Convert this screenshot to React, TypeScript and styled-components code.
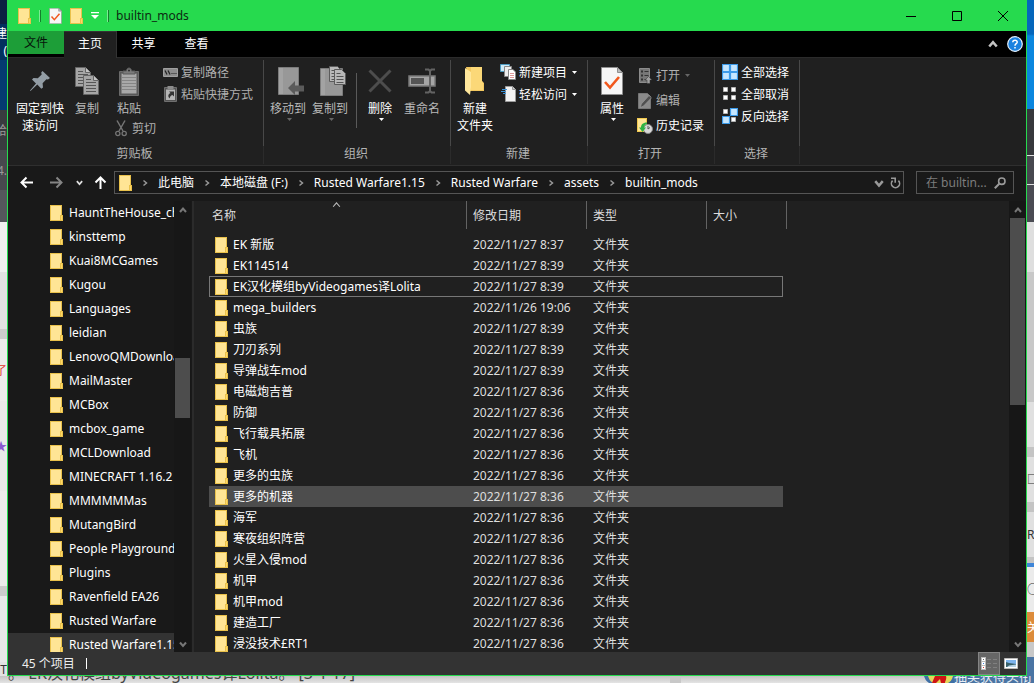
import React from 'react';
import styled, { createGlobalStyle, css } from 'styled-components';

const GlobalStyle = createGlobalStyle`
  *, *::before, *::after { box-sizing: border-box; }
  html, body { margin: 0; padding: 0; }
  body, button, input {
    font-family: "Noto Sans", "Noto Sans CJK SC", sans-serif;
    font-size: 12px;
    line-height: 17px;
  }
  body { background: #e6e6e6; color: #fff; overflow: hidden; }
  button { border: 0; padding: 0; margin: 0; background: none; color: inherit; }
  a { color: inherit; text-decoration: none; }
  ul, ol { margin: 0; padding: 0; list-style: none; }
  svg { display: block; flex: none; }
`;

/* ---------- desktop behind the window ---------- */

const Desktop = styled.div`
  display: grid;
  grid-template-columns: 7px minmax(0, 1fr) 7px;
  grid-template-rows: minmax(0, 1fr) 7px;
  height: 100vh;
`;

const Strip = styled.div`
  display: flex;
  flex-direction: column;
  overflow: hidden;
  min-height: 0;
`;

const Patch = styled.div<{ h?: number; bg: string; fg?: string }>`
  flex: ${p => (p.h ? `0 0 ${p.h}px` : '1 0 0')};
  background: ${p => p.bg};
  color: ${p => p.fg || '#333'};
  display: flex;
  flex-direction: column;
  justify-content: center;
  align-items: flex-end;
  white-space: nowrap;
  overflow: hidden;
`;

const RightPatch = styled(Patch)`
  align-items: flex-start;
`;

const Ledge = styled.div`
  grid-column: 1 / -1;
  display: flex;
  align-items: flex-end;
  overflow: hidden;
  background: linear-gradient(#c4c4c4, #e4e4e4);
  color: #444;
`;

const LedgeText = styled.span`
  flex: 1;
  padding-left: 8px;
  font-size: 16px;
  line-height: 20px;
  white-space: nowrap;
`;

const LedgeGap = styled.span<{ w: number; bg: string }>`
  width: ${p => p.w}px;
  height: 7px;
  background: ${p => p.bg};
`;

const Banner = styled.span`
  width: 80px;
  height: 7px;
  overflow: hidden;
  display: flex;
  align-items: flex-end;
  background: #4a74a3;
  color: #e8eef5;
  font-size: 13px;
  line-height: 13px;
  white-space: nowrap;
`;

/* ---------- window ---------- */

const Window = styled.main`
  display: flex;
  flex-direction: column;
  min-height: 0;
  background: #191919;
  border: 1px solid #26da4e;
  border-top: 0;
`;

const TitleBar = styled.header`
  flex: none;
  display: flex;
  align-items: center;
  height: 31px;
  padding-left: 10px;
  background: #26da4e;
  color: #0c2a12;
`;

const QuickAccess = styled.div`
  display: flex;
  align-items: center;
  gap: 8px;
`;

const Tick = styled.span`
  width: 2px;
  height: 12px;
  border: solid #157f2c;
  border-width: 0 1px 0 0;
  background: #7ceb95;
`;

const Title = styled.h1`
  flex: 1;
  margin: 0 0 0 7px;
  font-size: 12px;
  font-weight: 400;
`;

const CaptionButton = styled.button`
  width: 46px;
  height: 31px;
  display: grid;
  place-items: center;
  color: #000;
`;

const TabRow = styled.nav`
  flex: none;
  display: flex;
  height: 27px;
  background: #000;
  border-bottom: 1px solid #2b2b2b;
`;

const Tab = styled.button<{ $kind?: 'file' | 'active' }>`
  width: 53px;
  height: 25px;
  color: #fff;
  ${p => p.$kind === 'file' && css`
    width: 56px;
    height: 23px;
    background: #1d9e38;
    color: #06150a;
  `}
  ${p => p.$kind === 'active' && css`
    height: 27px;
    padding-bottom: 3px;
    background: #202020;
    border: solid #333;
    border-width: 1px 1px 0 0;
  `}
`;

const TabTools = styled.div`
  margin-left: auto;
  display: flex;
  align-items: center;
  gap: 9px;
  padding-right: 3px;
`;

const Ribbon = styled.section`
  flex: none;
  display: flex;
  height: 108px;
  background: #202020;
  border-bottom: 1px solid #2f2f2f;
`;

const Group = styled.section<{ w: number; pad: number }>`
  width: ${p => p.w}px;
  flex: none;
  display: grid;
  grid-template-rows: 1fr 24px;
  padding-top: 2px;
  background: linear-gradient(#484848 0 86px, #2b2b2b 86px 104px, transparent 104px) right 2px / 1px 100% no-repeat;
  & > div { padding-left: ${p => p.pad}px; }
`;

const GroupBody = styled.div`
  display: flex;
  align-items: flex-start;
  padding-top: 1px;
`;

const GroupName = styled.h2`
  margin: 0;
  padding: 4px 3px 0 0;
  font-size: 12px;
  font-weight: 400;
  text-align: center;
  color: #b4b4b4;
`;

const BigButton = styled.button<{ w: number; $dim?: boolean }>`
  width: ${p => p.w}px;
  flex: none;
  display: flex;
  flex-direction: column;
  align-items: center;
  padding-top: 4px;
  white-space: nowrap;
  color: ${p => (p.$dim ? '#b9b9b9' : '#fff')};
`;

const BigIcon = styled.span`
  height: 32px;
  margin-bottom: 3px;
  display: grid;
  place-items: center;
`;

const Stack = styled.div<{ ml?: number; mt?: number }>`
  display: flex;
  flex-direction: column;
  margin-left: ${p => p.ml || 0}px;
  margin-top: ${p => p.mt || 0}px;
`;

const SmallButton = styled.button<{ h?: number; $dim?: boolean }>`
  height: ${p => p.h || 22}px;
  display: flex;
  align-items: center;
  gap: 3px;
  white-space: nowrap;
  color: ${p => (p.$dim ? '#b0b0b0' : '#fff')};
`;

const IconSlot = styled.span`
  width: 16px;
  display: grid;
  place-items: center;
`;

const Rule = styled.span`
  width: 1px;
  height: 55px;
  margin: 12px 7px 0 5px;
  background: #5a5a5a;
`;

const CaretBox = styled.span<{ $side?: boolean }>`
  color: inherit;
  ${p => p.$side ? css`margin-left: 2px;` : css`margin-top: 1px; padding-left: 3px;`}
`;

/* ---------- address row ---------- */

const AddressRow = styled.div`
  flex: none;
  display: flex;
  align-items: center;
  height: 35px;
  padding: 0 12px 2px;
`;

const NavButtons = styled.div`
  display: grid;
  align-items: center;
  justify-items: start;
  grid-template-columns: 30px 26px 18px 20px;
`;

const AddressBox = styled.div`
  flex: 1;
  min-width: 0;
  height: 23px;
  display: flex;
  align-items: center;
  padding: 0 2px 0 4px;
  border: 1px solid #555;
`;

const Crumbs = styled.ol`
  flex: 1;
  min-width: 0;
  display: flex;
  align-items: center;
  overflow: hidden;
  white-space: nowrap;
  li { display: flex; align-items: center; }
  li > svg { margin: 0 9px; }
`;

const RefreshButton = styled.button`
  margin-left: 6px;
`;

const SearchBox = styled.label`
  width: 98px;
  height: 23px;
  margin-left: 12px;
  display: flex;
  align-items: center;
  padding: 0 7px 0 9px;
  border: 1px solid #555;
`;

const SearchInput = styled.input`
  flex: 1;
  min-width: 0;
  padding: 0;
  border: 0;
  outline: 0;
  background: none;
  color: #fff;
  &::placeholder { color: #7d7d7d; opacity: 1; }
`;

/* ---------- panes ---------- */

const Panes = styled.div`
  flex: 1;
  min-height: 0;
  display: flex;
`;

const Tree = styled.nav`
  width: 166px;
  flex: none;
  overflow: hidden;
`;

const TreeLink = styled.a<{ $current: boolean }>`
  height: 24px;
  display: flex;
  align-items: center;
  gap: 6px;
  padding: 0 0 1px 42px;
  overflow: hidden;
  white-space: nowrap;
  background: ${p => (p.$current ? '#333' : 'transparent')};
`;

const ScrollTrack = styled.div`
  width: 17px;
  flex: none;
  display: flex;
  flex-direction: column;
  align-items: center;
  background: #171717;
  & > svg { margin: 5px 0 4px; }
`;

const ScrollSpace = styled.span<{ grow: number }>`
  flex: ${p => p.grow} 0 0;
`;

const Thumb = styled.span<{ grow: number }>`
  flex: ${p => p.grow} 0 0;
  width: 15px;
  background: #4d4d4d;
`;

const Listing = styled.div`
  flex: 1;
  min-width: 0;
  overflow: hidden;
  margin-left: 1px;
  padding-left: 15px;
  border-left: 2px solid #2b2b2b;
  background: #202020;
`;

const FileTable = styled.table`
  width: 578px;
  table-layout: fixed;
  border-collapse: separate;
  border-spacing: 0;
  td, th { padding: 0 0 0 6px; text-align: left; font-weight: 400; white-space: nowrap; }
  th:first-child { padding-left: 3px; }
  tbody::before { content: ""; display: block; height: 5px; }
`;

const HeadCell = styled.th`
  height: 28px;
  color: #dcdcdc;
  border-right: 1px solid #636363;
`;

const SortHead = styled.span`
  display: grid;
  grid-template-columns: 1fr auto 1fr;
  align-items: start;
  padding-right: 6px;
  svg { margin-top: -7px; }
`;

const Row = styled.tr<{ $state?: string }>`
  height: 21px;
  color: #dedede;
  ${p => p.$state === 'focus' && css`
    td:not(:last-child) { box-shadow: inset 0 1px #777, inset 0 -1px #777; }
    td:first-child { box-shadow: inset 0 1px #777, inset 0 -1px #777, inset 1px 0 #777; }
    td:nth-child(4) { box-shadow: inset 0 1px #777, inset 0 -1px #777, inset -1px 0 #777; }
  `}
  ${p => p.$state === 'hover' && css`td:not(:last-child) { background: #4d4d4d; }`}
`;

const NameCell = styled.span`
  display: flex;
  align-items: center;
  gap: 5px;
  color: #fff;
`;

const StatusBar = styled.footer`
  flex: none;
  display: flex;
  align-items: center;
  height: 23px;
  padding: 0 4px 0 14px;
  background: #333;
`;

const Count = styled.span`
  flex: 1;
  display: flex;
  align-items: center;
  gap: 11px;
  color: #eee;
  &::after { content: ""; width: 1px; height: 11px; background: #fff; }
`;

const ViewButton = styled.button<{ $on?: boolean }>`
  width: 22px;
  height: 23px;
  display: grid;
  place-items: center;
  background: ${p => (p.$on ? '#666' : 'transparent')};
  border: ${p => (p.$on ? '1px solid #858585' : '0')};
`;

/* ---------- drawings ---------- */

const FolderIcon = () => (
  <svg width="13" height="16" viewBox="0 0 13 16">
    <path d="M0 0h12v10h1v6H0z" fill="#e9c14b" />
    <path d="M1 1h10v9h-1v5H1z" fill="#ffe595" />
    <path d="M11 11h1v4h-1z" fill="#ffd767" />
  </svg>
);

const Caret = ({ dim }: { dim?: boolean }) => (
  <svg width="5" height="3" viewBox="0 0 5 3">
    <path d="M0 0h5L2.500 3z" fill={dim ? '#666' : '#fff'} />
  </svg>
);

const Chevron = ({ dir, color = '#999', size = 8, stroke = 2 }: { dir: 'up' | 'down' | 'right'; color?: string; size?: number; stroke?: number }) => {
  const d = { up: 'M1 6l3-3.500L7 6', down: 'M1 2.500L4 6l3-3.500', right: 'M2.500 1.500L5.500 4L2.500 6.500' }[dir];
  return (
    <svg width={size} height={size} viewBox="0 0 8 8" fill="none" stroke={color} strokeWidth={stroke}>
      <path d={d} />
    </svg>
  );
};

const Arrow = ({ rotate = 0, color = '#fff' }: { rotate?: number; color?: string }) => (
  <svg width="13" height="13" viewBox="0 0 13 13" fill="none" stroke={color} strokeWidth="2">
    <g transform={`rotate(${rotate} 6.5 6.5)`}><path d="M13 6.500H1.500M6.500 1.500l-5 5l5 5" /></g>
  </svg>
);

const CheckPage = ({ w, h }: { w: number; h: number }) => (
  <svg width={w} height={h} viewBox="0 0 22 28">
    <path d="M.5.5h16l5 5v22H.5z" fill="#f6f6f6" stroke="#8f8f8f" />
    <path d="M16.500.5v5h5z" fill="#bbb" stroke="#8f8f8f" />
    <path d="M4 15l5 5.500L18 10" fill="none" stroke="#f1571c" strokeWidth="2.600" />
  </svg>
);

const PinIcon = () => (
  <svg width="22" height="22" viewBox="0 0 22 22" fill="#939da5">
    <path d="M13.500 1L21 8l-2 1.500-1.600-.3-3.800 4 .4 4.300-1.700 1.200-4-4.200L1.500 21 1 20.500l6-7L3 9.600 4.500 8l4.300.2L12.700 4.500 12.200 2.500z" />
  </svg>
);

const Sheet = ({ x, y }: { x: number; y: number }) => (
  <g transform={`translate(${x} ${y})`}>
    <path d="M.5.5h10l5 5v14H.5z" fill="#a6a6a6" stroke="#666" />
    <path d="M10.500.5v5h5" fill="#c4c4c4" stroke="#666" />
    <path d="M3 4.500h5M3 7.500h10M3 10.500h10M3 13.500h10M3 16.500h10" stroke="#565656" />
  </g>
);

const CopyIcon = () => (
  <svg width="24" height="28" viewBox="0 0 24 28"><Sheet x={0} y={0} /><Sheet x={8} y={8} /></svg>
);

const PasteIcon = () => (
  <svg width="20" height="29" viewBox="0 0 20 29">
    <path d="M.5 4.500h19v24H.5z" fill="#595959" stroke="#6b6b6b" />
    <path d="M2.500 6.500h15v20h-15z" fill="#a8a8a8" />
    <path d="M3 10.500h14M3 13.500h14M3 16.500h14M3 19.500h14M3 22.500h14" stroke="#858585" />
    <path d="M4 7V4h3.500C7.500 0 12.500 0 12.500 4H16v3z" fill="#7b7b7b" stroke="#5a5a5a" />
    <circle cx="10" cy="3.500" r="1" fill="#2a2a2a" />
  </svg>
);

const CutIcon = () => (
  <svg width="12" height="17" viewBox="0 0 12 17" fill="none" stroke="#757575">
    <path d="M2 .5L8 11M10 .5L4 11" strokeWidth="1.500" />
    <circle cx="2.800" cy="13.500" r="2.100" strokeWidth="1.300" />
    <circle cx="9.200" cy="13.500" r="2.100" strokeWidth="1.300" />
  </svg>
);

const PathIcon = () => (
  <svg width="15" height="9" viewBox="0 0 15 9">
    <path d="M.5.5h14v8H.5z" fill="#8c8c8c" stroke="#a0a0a0" />
    <path d="M2 2.500l2 4M5 2.500l2 4" stroke="#222" strokeWidth="1.300" />
    <path d="M8.500 5.500h1M10.500 5.500h1M12.500 5.500h1" stroke="#222" />
  </svg>
);

const PasteLinkIcon = () => (
  <svg width="13" height="16" viewBox="0 0 13 16">
    <path d="M.5 1.500h12v14H.5z" fill="#555" stroke="#6f6f6f" />
    <path d="M2 3.500h9v10.500H2z" fill="#b5b5b5" />
    <path d="M3.500 0h6v3h-6z" fill="#8c8c8c" />
    <path d="M5 5.500h5v5L8.500 9C6.500 9.500 5.500 11 6 12.500 3.500 11 4 8 6.500 7z" fill="#333" />
  </svg>
);

const MoveIcon = () => (
  <svg width="32" height="28" viewBox="-6 0 32 28">
    <path d="M.5.500h20v27H.5z" fill="#989898" stroke="#7c7c7c" />
    <path d="M1 1h4v26H1z" fill="#a3a3a3" />
    <path d="M10 21l7-7v4.500h9v6h-9V28z" fill="#5b5b5b" />
  </svg>
);

const CopyToIcon = () => (
  <svg width="32" height="30" viewBox="-6 0 32 30">
    <path d="M.5 2.500h22v27H.5z" fill="#989898" stroke="#7c7c7c" />
    <path d="M1 3h4v26H1z" fill="#a3a3a3" />
    <path d="M9.500.5h8l4 4v11h-12z" fill="#b8b8b8" stroke="#5c5c5c" />
    <path d="M11.500 4.500h5M11.500 7.500h8M11.500 10.500h8M11.500 13.500h3" stroke="#555" />
    <path d="M14.500 3.500h7l4 4v11h-11z" fill="#b8b8b8" stroke="#5c5c5c" />
    <path d="M16.500 7.500h4M16.500 10.500h7M16.500 13.500h7M16.500 16.500h7" stroke="#555" />
  </svg>
);

const DeleteIcon = () => (
  <svg width="24" height="24" viewBox="0 0 24 24" stroke="#4d4d4d" strokeWidth="3">
    <path d="M1.500 1.500l21 21M22.500 1.500l-21 21" />
  </svg>
);

const RenameIcon = () => (
  <svg width="28" height="26" viewBox="0 0 28 26" fill="none">
    <path d="M1 8h26v10H1z" fill="#a5a5a5" stroke="#7a7a7a" strokeWidth="1.500" />
    <path d="M3 10h13v6H3z" fill="#555" />
    <path d="M17 1.500h3.500L22 3l1.500-1.500H27M17 24.500h3.500L22 23l1.500 1.500H27M22 3v20" stroke="#636363" strokeWidth="2" />
  </svg>
);

const NewFolderIcon = () => (
  <svg width="20" height="28" viewBox="0 0 20 28">
    <path d="M1 0h16v14l2 2v8H5z" fill="#f3c85f" />
    <path d="M6 0h11v14l1 2v7H6z" fill="#fbd878" />
    <path d="M0 1l6 4v15l-1 8-5-4.500z" fill="#ffe79c" />
  </svg>
);

const NewItemIcon = () => (
  <svg width="16" height="16" viewBox="0 0 16 16">
    <path d="M.5.500h9v7h-9z" fill="#cdeaf7" stroke="#4f9cc2" />
    <path d="M4.500 2.500h7v10h-7z" fill="#eee" stroke="#888" />
    <path d="M8.500 5.500h4.500l2.500 2.500v7.500h-7z" fill="#fff" stroke="#888" />
    <path d="M10 9.500h4M10 11.500h4M10 13.500h4" stroke="#d99" />
  </svg>
);

const EasyAccessIcon = () => (
  <svg width="15" height="16" viewBox="0 0 15 16">
    <path d="M4.500.5h7l3 3v12h-10z" fill="#f3f3f3" stroke="#9c9c9c" />
    <path d="M11.500.5v3h3" fill="#ccc" stroke="#999" />
    <path d="M1 3.500h5M0 5.500h5M2 7.500h3" stroke="#3c92d6" />
  </svg>
);

const OpenIcon = () => (
  <svg width="14" height="16" viewBox="0 0 14 16">
    <path d="M1.500.500h10v14h-10z" fill="#777" stroke="#8c8c8c" />
    <path d="M3 2.500h2v2H3zM3 6.500h2v2H3zM3 10.500h2v2H3z" fill="#333" />
    <path d="M6.500 3.500h4M6.500 7.500h4M6.500 11.500h2" stroke="#333" />
    <path d="M10.500 8.500l3.500 3.500h-2v3.500H9V12H7z" fill="#a0a0a0" stroke="#333" strokeWidth=".5" />
  </svg>
);

const EditIcon = () => (
  <svg width="14" height="16" viewBox="0 0 14 16">
    <path d="M.5.500h9l3 3v12H.5z" fill="#8a8a8a" stroke="#777" />
    <path d="M2.500 14.500l.8-3.500L11 2.500l2.500 2.300L5.500 13z" fill="#505050" stroke="#a0a0a0" strokeWidth=".6" />
  </svg>
);

const HistoryIcon = () => (
  <svg width="16" height="16" viewBox="0 0 16 16">
    <path d="M0 0h10v10h1v4H0z" fill="#f0c84f" />
    <path d="M1 1h8v12H1z" fill="#ffe595" />
    <circle cx="11" cy="11" r="4.500" fill="#d8d8d8" stroke="#888" />
    <path d="M11 8v3l2-1.500" fill="none" stroke="#555" />
    <path d="M10 4.500C5.500 4.500 4 7 4 9.500H2L5.500 14 9 9.500H7C7 8 8 6.500 10 6z" fill="#2fb344" />
  </svg>
);

const TILES: [number, number][] = [[0, 0], [8, 0], [0, 8], [8, 8]];
const TilesIcon = ({ on }: { on: boolean[] }) => (
  <svg width="16" height="16" viewBox="0 0 16 16">
    {TILES.map(([x, y], i) => on[i]
      ? <path key={i} d={`M${x + .5} ${y + .5}h7v7h-7z`} fill="#c5e6ff" stroke="#3d9be9" strokeWidth="1.200" />
      : <path key={i} d={`M${x + (x ? 1.5 : 1.500)} ${y + 1.500}h4v4h-4z`} fill="#fff" stroke="#b4b4b4" />)}
  </svg>
);

const HelpIcon = () => (
  <svg width="16" height="16" viewBox="0 0 16 16" fill="none">
    <circle cx="8" cy="8" r="7.300" fill="#1b82e0" stroke="#e4f0fb" strokeWidth="1.200" />
    <path d="M5.800 6.300C5.800 3.400 10.300 3.600 10.200 6.200 10.100 7.700 8 7.700 8 9.700M8 10.900v1.600" stroke="#fff" strokeWidth="1.500" />
  </svg>
);

const RefreshIcon = () => (
  <svg width="11" height="12" viewBox="0 0 11 12" fill="none" stroke="#999" strokeWidth="1.600">
    <path d="M2.600 3.600A4.100 4.100 0 1 0 8.400 3.600" />
    <path d="M1 1.300h4.200v4.400" />
  </svg>
);

const SearchIcon = () => (
  <svg width="12" height="12" viewBox="0 0 12 12" fill="none" stroke="#9a9a9a">
    <circle cx="7.800" cy="4.200" r="3.200" strokeWidth="1.600" />
    <path d="M5.500 6.500L.8 11.200" strokeWidth="2" />
  </svg>
);

const DetailsIcon = () => (
  <svg width="16" height="13" viewBox="0 0 16 13">
    <path d="M0 0h5v13H0z" fill="#bbb" />
    <path d="M1 1h3v3H1zM1 5h3v3H1zM1 9h3v3H1z" fill="#fff" />
    <path d="M2 2h1v1H2z" fill="#666" /><path d="M2 6h1v1H2z" fill="#3d7fe0" /><path d="M2 10h1v1H2z" fill="#d33" />
    <path d="M6 2.500h4M12 2.500h4M6 6.500h4M12 6.500h4M6 10.500h4M12 10.500h4" stroke="#808080" />
  </svg>
);

const PictureIcon = () => (
  <svg width="14" height="11" viewBox="0 0 14 11">
    <path d="M.5.500h13v10H.5z" fill="#fff" stroke="#bbb" />
    <path d="M2 2h10v7H2z" fill="#7db4ee" />
    <path d="M2 4l3 1 7 1v3H2z" fill="#38606b" />
    <path d="M5 7.500l7-1V9H3z" fill="#b8d4e8" />
  </svg>
);

const BadgeIcon = () => (
  <svg width="30" height="7" viewBox="0 0 30 7">
    <path d="M0 0h30v7H5C2 5 1 3 0 0z" fill="#3f6fa5" />
    <path d="M4 0h25c-1 4-3 6-5 7H9C6 5 5 3 4 0z" fill="#e3d75c" />
    <path d="M11 0h11c1 3-1 5-1 7h-4l-1-4-4 4H8z" fill="#cf1414" />
  </svg>
);

/* ---------- data ---------- */

const treeItems = [
  'HauntTheHouse_chs', 'kinsttemp', 'Kuai8MCGames', 'Kugou', 'Languages', 'leidian', 'LenovoQMDownload',
  'MailMaster', 'MCBox', 'mcbox_game', 'MCLDownload', 'MINECRAFT 1.16.2', 'MMMMMMas', 'MutangBird',
  'People Playground', 'Plugins', 'Ravenfield EA26', 'Rusted Warfare', 'Rusted Warfare1.15',
];

const crumbs = ['此电脑', '本地磁盘 (F:)', 'Rusted Warfare1.15', 'Rusted Warfare', 'assets', 'builtin_mods'];

const files: [string, string, string?][] = [
  ['EK 新版', '2022/11/27 8:37'],
  ['EK114514', '2022/11/27 8:39'],
  ['EK汉化模组byVideogames译Lolita', '2022/11/27 8:39', 'focus'],
  ['mega_builders', '2022/11/26 19:06'],
  ['虫族', '2022/11/27 8:39'],
  ['刀刃系列', '2022/11/27 8:39'],
  ['导弹战车mod', '2022/11/27 8:39'],
  ['电磁炮吉普', '2022/11/27 8:36'],
  ['防御', '2022/11/27 8:36'],
  ['飞行载具拓展', '2022/11/27 8:36'],
  ['飞机', '2022/11/27 8:36'],
  ['更多的虫族', '2022/11/27 8:36'],
  ['更多的机器', '2022/11/27 8:36', 'hover'],
  ['海军', '2022/11/27 8:36'],
  ['寒夜组织阵营', '2022/11/27 8:36'],
  ['火星入侵mod', '2022/11/27 8:36'],
  ['机甲', '2022/11/27 8:36'],
  ['机甲mod', '2022/11/27 8:36'],
  ['建造工厂', '2022/11/27 8:36'],
  ['浸没技术£RT1', '2022/11/27 8:36'],
];

/* ---------- composed parts ---------- */

type BigProps = { w: number; icon: React.ReactNode; lines: string[]; dim?: boolean; caret?: boolean };
const Big = ({ w, icon, lines, dim, caret }: BigProps) => (
  <BigButton type="button" w={w} $dim={dim}>
    <BigIcon>{icon}</BigIcon>
    {lines.map(l => <span key={l}>{l}</span>)}
    {caret && <CaretBox><Caret dim={dim} /></CaretBox>}
  </BigButton>
);

type SmallProps = { h?: number; icon: React.ReactNode; label: string; dim?: boolean; caret?: boolean };
const Small = ({ h, icon, label, dim, caret }: SmallProps) => (
  <SmallButton type="button" h={h} $dim={dim}>
    <IconSlot>{icon}</IconSlot>
    {label}
    {caret && <CaretBox $side><Caret dim={dim} /></CaretBox>}
  </SmallButton>
);

const Scrollbar = ({ parts }: { parts: [number, number, number] }) => (
  <ScrollTrack>
    <Chevron dir="up" color="#777" />
    <ScrollSpace grow={parts[0]} />
    <Thumb grow={parts[1]} />
    <ScrollSpace grow={parts[2]} />
    <Chevron dir="down" color="#777" />
  </ScrollTrack>
);

export default function App() {
  return (
    <>
      <GlobalStyle />
      <Desktop>
        <Strip>
          <Patch h={24} bg="#0b1f42" />
          <Patch h={36} bg="#03305e" fg="#fff"><span>建</span><span>(</span></Patch>
          <Patch h={50} bg="#043a70" />
          <Patch h={40} bg="#393b3f" fg="#999">给</Patch>
          <Patch h={40} bg="#47494e" fg="#999">4.</Patch>
          <Patch h={32} bg="#54565c" />
          <Patch h={50} bg="#f0f0f0" />
          <Patch h={57} bg="#e2e2e2" />
          <Patch h={10} bg="#cccccc" />
          <Patch h={62} bg="#ececec" fg="#e03a2f">了</Patch>
          <Patch h={90} bg="#e9e9e9" fg="#8a5bd0">★</Patch>
          <Patch h={95} bg="#ececec" />
          <Patch h={10} bg="#cccccc" />
          <Patch bg="#e8e8e8" />
          <Patch h={14} bg="#e2e2e2">T</Patch>
        </Strip>

        <Window>
          <TitleBar>
            <QuickAccess>
              <FolderIcon />
              <Tick />
              <CheckPage w={13} h={16} />
              <FolderIcon />
              <svg width="8" height="7" viewBox="0 0 8 7" fill="#fff">
                <path d="M0 0h8v1.200H0zM0 3h8L4 7z" />
              </svg>
              <Tick />
            </QuickAccess>
            <Title>builtin_mods</Title>
            <CaptionButton type="button" aria-label="最小化">
              <svg width="10" height="10" viewBox="0 0 10 10" stroke="currentColor"><path d="M0 5.500h10" /></svg>
            </CaptionButton>
            <CaptionButton type="button" aria-label="最大化">
              <svg width="10" height="10" viewBox="0 0 10 10" stroke="currentColor" fill="none"><path d="M.5.500h9v9h-9z" /></svg>
            </CaptionButton>
            <CaptionButton type="button" aria-label="关闭">
              <svg width="10" height="10" viewBox="0 0 10 10" stroke="currentColor"><path d="M0 0l10 10M10 0L0 10" /></svg>
            </CaptionButton>
          </TitleBar>

          <TabRow>
            <Tab type="button" $kind="file">文件</Tab>
            <Tab type="button" $kind="active">主页</Tab>
            <Tab type="button">共享</Tab>
            <Tab type="button">查看</Tab>
            <TabTools>
              <Chevron dir="up" color="#c4c4c4" size={10} />
              <HelpIcon />
            </TabTools>
          </TabRow>

          <Ribbon>
            <Group w={256} pad={6}>
              <GroupBody>
                <Big w={52} icon={<PinIcon />} lines={['固定到快', '速访问']} />
                <Big w={42} icon={<CopyIcon />} lines={['复制']} dim />
                <Stack ml={5}>
                  <Big w={32} icon={<PasteIcon />} lines={['粘贴']} dim />
                  <Small h={22} icon={<CutIcon />} label="剪切" dim />
                </Stack>
                <Stack ml={6}>
                  <Small icon={<PathIcon />} label="复制路径" dim />
                  <Small icon={<PasteLinkIcon />} label="粘贴快捷方式" dim />
                </Stack>
              </GroupBody>
              <GroupName>剪贴板</GroupName>
            </Group>

            <Group w={187} pad={3}>
              <GroupBody>
                <Big w={42} icon={<MoveIcon />} lines={['移动到']} dim caret />
                <Big w={42} icon={<CopyToIcon />} lines={['复制到']} dim caret />
                <Rule />
                <Big w={32} icon={<DeleteIcon />} lines={['删除']} caret />
                <Big w={52} icon={<RenameIcon />} lines={['重命名']} dim />
              </GroupBody>
              <GroupName>组织</GroupName>
            </Group>

            <Group w={137} pad={3}>
              <GroupBody>
                <Big w={42} icon={<NewFolderIcon />} lines={['新建', '文件夹']} />
                <Stack ml={4}>
                  <Small icon={<NewItemIcon />} label="新建项目" caret />
                  <Small icon={<EasyAccessIcon />} label="轻松访问" caret />
                </Stack>
              </GroupBody>
              <GroupName>新建</GroupName>
            </Group>

            <Group w={127} pad={4}>
              <GroupBody>
                <Big w={40} icon={<CheckPage w={22} h={28} />} lines={['属性']} caret />
                <Stack ml={5} mt={2}>
                  <Small h={25} icon={<OpenIcon />} label="打开" dim caret />
                  <Small h={25} icon={<EditIcon />} label="编辑" dim />
                  <Small h={25} icon={<HistoryIcon />} label="历史记录" />
                </Stack>
              </GroupBody>
              <GroupName>打开</GroupName>
            </Group>

            <Group w={85} pad={7}>
              <GroupBody>
                <Stack>
                  <Small icon={<TilesIcon on={[true, true, true, true]} />} label="全部选择" />
                  <Small icon={<TilesIcon on={[false, false, false, false]} />} label="全部取消" />
                  <Small icon={<TilesIcon on={[false, true, true, false]} />} label="反向选择" />
                </Stack>
              </GroupBody>
              <GroupName>选择</GroupName>
            </Group>
          </Ribbon>

          <AddressRow>
            <NavButtons>
              <button type="button" aria-label="后退"><Arrow /></button>
              <button type="button" aria-label="前进"><Arrow rotate={180} color="#858585" /></button>
              <button type="button" aria-label="最近位置"><Chevron dir="down" color="#e0e0e0" size={7} /></button>
              <button type="button" aria-label="上移"><Arrow rotate={90} /></button>
            </NavButtons>
            <AddressBox>
              <FolderIcon />
              <Crumbs>
                {crumbs.map(c => (
                  <li key={c}><Chevron dir="right" stroke={1.500} /><a href="#">{c}</a></li>
                ))}
              </Crumbs>
              <button type="button" aria-label="历史地址"><Chevron dir="down" size={10} /></button>
              <RefreshButton type="button" aria-label="刷新"><RefreshIcon /></RefreshButton>
            </AddressBox>
            <SearchBox>
              <SearchInput type="text" aria-label="搜索" placeholder="在 builtin..." />
              <SearchIcon />
            </SearchBox>
          </AddressRow>

          <Panes>
            <Tree>
              <ul>
                {treeItems.map((t, i) => (
                  <li key={t}>
                    <TreeLink href="#" $current={i === treeItems.length - 1}><FolderIcon />{t}</TreeLink>
                  </li>
                ))}
              </ul>
            </Tree>
            <Scrollbar parts={[140, 60, 217]} />
            <Listing>
              <FileTable>
                <colgroup>
                  <col width="258" /><col width="120" /><col width="120" /><col width="76" /><col width="4" />
                </colgroup>
                <thead>
                  <tr>
                    <HeadCell>
                      <SortHead>名称<Chevron dir="up" size={9} stroke={1} color="#bbb" /><span /></SortHead>
                    </HeadCell>
                    <HeadCell>修改日期</HeadCell>
                    <HeadCell>类型</HeadCell>
                    <HeadCell colSpan={2}>大小</HeadCell>
                  </tr>
                </thead>
                <tbody>
                  {files.map(([name, date, state]) => (
                    <Row key={name} $state={state}>
                      <td><NameCell><FolderIcon />{name}</NameCell></td>
                      <td>{date}</td>
                      <td>文件夹</td>
                      <td />
                      <td />
                    </Row>
                  ))}
                </tbody>
              </FileTable>
            </Listing>
            <Scrollbar parts={[0, 187, 230]} />
          </Panes>

          <StatusBar>
            <Count>45 个项目</Count>
            <ViewButton type="button" $on aria-label="详细信息"><DetailsIcon /></ViewButton>
            <ViewButton type="button" aria-label="大图标"><PictureIcon /></ViewButton>
          </StatusBar>
        </Window>

        <Strip>
          <RightPatch h={109} bg="linear-gradient(#0566bb 0 34px, #0a86de 36px)" />
          <RightPatch h={46} bg="#36383c" />
          <RightPatch h={1} bg="#ddd" />
          <RightPatch h={28} bg="#47484f" />
          <RightPatch h={1} bg="#ddd" />
          <RightPatch h={37} bg="#4a4b53" />
          <RightPatch h={50} bg="#dedede" />
          <RightPatch h={130} bg="#c8c8c8" />
          <RightPatch h={45} bg="#e0e0e0" />
          <RightPatch h={10} bg="#c4c4c4" />
          <RightPatch h={45} bg="#e0e0e0">□</RightPatch>
          <RightPatch h={10} bg="#c4c4c4" />
          <RightPatch h={45} bg="#e0e0e0">R</RightPatch>
          <RightPatch h={6} bg="#c4c4c4" />
          <RightPatch h={4} bg="#3f86d8" />
          <RightPatch h={45} bg="#ebebeb">○</RightPatch>
          <RightPatch h={30} bg="#dc8b3b" fg="#fff">关</RightPatch>
          <RightPatch h={15} bg="#c8c8c8" />
          <RightPatch bg="#4a74a3" />
        </Strip>

        <Ledge>
          <LedgeText>。 EK汉化模组byVideogames译Lolita。 [3-1 17]</LedgeText>
          <LedgeGap w={11} bg="#c8c8c8" />
          <LedgeGap w={243} bg="transparent" />
          <BadgeIcon />
          <Banner>抽奖获得头衔</Banner>
        </Ledge>
      </Desktop>
    </>
  );
}
